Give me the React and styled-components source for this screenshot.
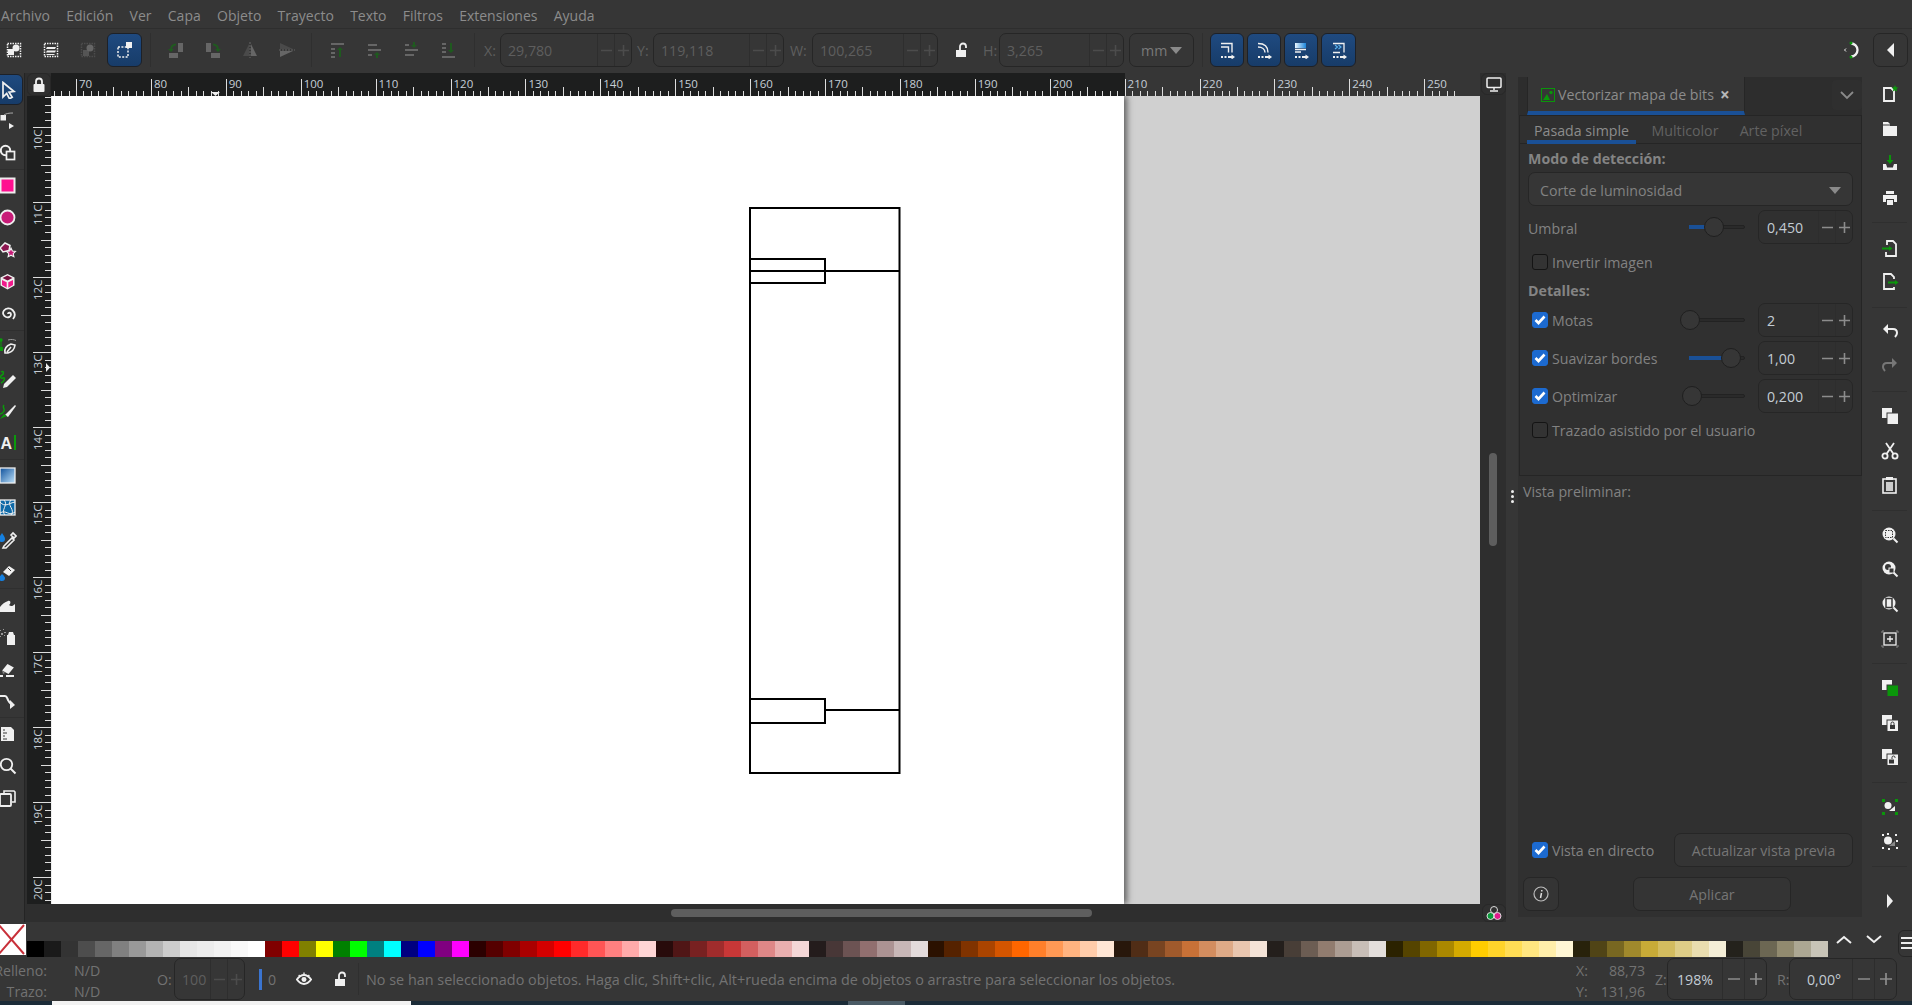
import React from "react";
import styled, { createGlobalStyle } from "styled-components";

const W = "#f0f0f0";
const G = "#0a960a";
const D = "#666";
const DG = "#1f5a1f";

const Global = createGlobalStyle`
  html, body { margin: 0; padding: 0; background: #363636; overflow: hidden; }
  * { box-sizing: border-box; }
  #root { width: 1912px; height: 1005px; }
`;

const Page = styled.div`
  width: 1912px; height: 1005px; display: flex; flex-direction: column; overflow: hidden;
  background: #363636; color: #8a8a8a;
  font-family: "Open Sans", "Noto Sans", sans-serif; font-size: 14.2px;
`;
const MenuBar = styled.div`
  height: 29px; flex: none; display: flex; align-items: center; padding: 3px 0 0 1px; gap: 16.3px;
  border-bottom: 1px solid #2e2e2e;
`;
const MenuItem = styled.span`font-size: 14px; color: #8c8c8c;`;
const Toolbar = styled.div`
  height: 44px; flex: none; display: flex; align-items: center; padding-bottom: 2px;
  & > :first-child { margin-left: -5px; }
`;
const IconBtn = styled.div`
  width: 37px; height: 34px; flex: none; display: flex; align-items: center; justify-content: center;
  margin-left: ${(p) => p.$ml || 0}px;
`;
const ActiveBtn = styled(IconBtn)`
  width: 35px; margin: 0 1px; border-radius: 6px; border: 1px solid #1d2128;
  background: linear-gradient(#1f4a80, #173c69);
`;
const BlueBtn = styled(ActiveBtn)`
  margin: 0 0 0 ${(p) => p.$ml ?? 3}px;
  width: ${(p) => p.$w || 34}px;
`;
const VSep = styled.div`
  width: 1px; height: 34px; flex: none; background: #2f2f2f; margin-left: ${(p) => p.$ml || 0}px;
`;
const Lbl = styled.span`
  flex: none; width: ${(p) => p.$w}px; margin-left: ${(p) => p.$ml || 0}px; color: ${(p) => p.$c || "#5e5e5e"};
`;
const Spin = styled.div`
  flex: none; width: ${(p) => p.$w}px; height: ${(p) => p.$h || 34}px; margin-left: ${(p) => p.$ml || 0}px;
  display: flex; border: 1px solid #262626; border-radius: 7px; overflow: hidden;
`;
const SpinVal = styled.div`
  flex: 1; min-width: 0; display: flex; align-items: center; padding-left: ${(p) => p.$pl || 7}px;
  color: ${(p) => p.$c || "#5e5e5e"}; white-space: nowrap;
`;
const SpinKey = styled.div`
  flex: none; width: ${(p) => p.$w || 17}px; display: flex; align-items: center; justify-content: center;
  border-left: 1px solid ${(p) => (p.$on ? "#2d2d2d" : "#2e2e2e")};
  color: ${(p) => (p.$on ? "#8c8c8c" : "#4c4c4c")};
`;
const Glyph = ({ plus, s = 11 }) => (
  <svg width={s} height={s} viewBox="0 0 11 11">
    <path d={plus ? "M0 5.5h11M5.5 0v11" : "M0 5.5h11"} stroke="currentColor" strokeWidth="1.6" />
  </svg>
);
const SpinBox = ({ value, w, h, ml, on, key1 = 17, pl, s }) => (
  <Spin $w={w} $h={h} $ml={ml}>
    <SpinVal $c={on ? "#c3ccd4" : undefined} $pl={pl}>{value}</SpinVal>
    <SpinKey $w={key1} $on={on}><Glyph s={s} /></SpinKey>
    <SpinKey $w={key1} $on={on}><Glyph plus s={s} /></SpinKey>
  </Spin>
);
const Combo = styled.div`
  flex: none; width: 65px; height: 34px; margin-left: 5px; display: flex; align-items: center; justify-content: space-between;
  padding: 0 11px 0 11px; border: 1px solid #262626; border-radius: 7px; color: #7a7a7a;
`;
const Tri = styled.span`
  width: 0; height: 0; border-left: 6px solid transparent; border-right: 6px solid transparent;
  border-top: 7px solid ${(p) => p.$c || "#8a8a8a"};
`;
const Spacer = styled.div`flex: 1;`;
const SquareBtn = styled.div`
  width: 35px; height: 34px; flex: none; margin: 0 4px 0 13px; border: 1px solid #262626; border-radius: 7px;
  display: flex; align-items: center; justify-content: center;
`;

/* main */
const Main = styled.div`flex: 1; min-height: 0; display: flex;`;
const LeftTools = styled.div`
  width: 25px; flex: none; height: 100%; display: flex; flex-direction: column; align-items: stretch;
  border-right: 1px solid #242424;
`;
const ToolSlot = styled.div`
  height: 32px; flex: none; display: flex; align-items: center; justify-content: flex-start; overflow: hidden;
  & > svg { margin-left: -1px; }
`;
const ToolActive = styled(ToolSlot)`
  height: 31px; margin: 1px 1px 0 -4px; padding-left: 4px; border-radius: 0 6px 6px 0; border: 1px solid #1d2128;
  background: linear-gradient(#1f4a80, #173c69);
`;
const HLine = styled.div`
  height: 1px; flex: none; background: #2f2f2f;
`;
const CanvasCol = styled.div`
  width: 1481px; flex: none; display: grid;
  grid-template-columns: 26px 1429px 26px; grid-template-rows: 23px 808px 18px;
  background: #2e2e2e;
`;
const LockBox = styled.div`
  display: flex; align-items: center; justify-content: center; background: #2f2f2f; border: 1px solid #282828; border-radius: 6px;
  margin-left: 2px;
`;
const RulerTop = styled.svg`display: block; background: #363636;`;
const ScreenBtn = styled.div`
  display: flex; align-items: center; justify-content: center; border: 1px solid #282828; border-radius: 6px; background: #2f2f2f;
  height: 22px; margin-left: 1px;
`;
const RulerLeft = styled.svg`display: block; background: #1d1e1e; margin-left: 2px;`;
const Viewport = styled.div`
  position: relative; display: flex; background: #d0d0d0; overflow: hidden;
`;
const Sheet = styled.div`
  width: 1073px; flex: none; background: #fff; box-shadow: 3px 0 6px rgba(60,60,60,.75); position: relative; border-left: 1px solid #eee;
`;
const Drawing = styled.svg`position: absolute; left: -1px; top: 0; display: block;`;
const VScroll = styled.div`
  position: relative; background: #2e2e2e;
`;
const VThumb = styled.div`
  position: absolute; left: 9px; top: 357px; width: 8px; height: 93px; border-radius: 4px; background: #5e5e5e;
`;
const Corner = styled.div`background: #2e2e2e; margin-left: 2px;`;
const HScroll = styled.div`
  background: #2e2e2e; display: flex; align-items: center;
`;
const HThumb = styled.div`
  width: 421px; height: 8px; border-radius: 4px; background: #5e5e5e; margin-left: 620px;
`;
const ColorBtn = styled.div`
  display: flex; align-items: center; justify-content: center; border: 1px solid #282828; border-radius: 6px; background: #303030; margin-left: 2px;
`;

const Handle = styled.div`
  width: 12px; flex: none; display: flex; flex-direction: column; align-items: center; padding-top: 417px; gap: 2px;
`;
const Dot = styled.i`width: 3px; height: 3px; background: #eee; display: block; border-radius: 50%;`;
const Dock = styled.div`
  width: 344px; flex: none; height: 840px; margin-top: 4px; padding-bottom: 6px; display: flex; flex-direction: column; background: #303030;
`;
const TabBar = styled.div`height: 38px; flex: none; display: flex; align-items: flex-start; background: #2d2d2d; padding-left: 9px;`;
const DockTab = styled.div`
  width: 218px; height: 38px; flex: none; display: flex; align-items: center; gap: 3px; padding: 1px 0 0 13px; white-space: nowrap;
  border-left: 1px solid #262626; border-right: 1px solid #262626; border-bottom: 4px solid #1a5096; background: #363636; color: #8c8c8c;
`;
const TabClose = styled.span`color: #b8b8b8; font-size: 17px; line-height: 17px; font-weight: 700; margin-left: 3px;`;
const ChevBox = styled.div`
  width: 30px; height: 30px; margin: 3px 0 0 auto; background: #2f2f2f; border-radius: 4px; display: flex; align-items: center; justify-content: center;
`;
const Box = styled.div`
  width: 343px; margin-left: 1px; height: 361px; flex: none; border: 1px solid #252525; display: flex; flex-direction: column; background: #303030;
`;
const InnerTabs = styled.div`
  height: 28px; flex: none; display: flex; padding-left: 7px; border-bottom: 1px solid #252525;
`;
const InnerTab = styled.div`
  height: 28px; display: flex; align-items: center; justify-content: center; flex: none;
  width: ${(p) => p.$w}px; margin-right: ${(p) => p.$mr || 0}px;
  color: ${(p) => (p.$on ? "#8c8c8c" : "#626262")};
  border-bottom: ${(p) => (p.$on ? "4px solid #1a5096" : "none")};
  padding-top: ${(p) => (p.$on ? 4 : 0)}px;
`;
const Bold = styled.div`
  height: ${(p) => p.$h}px; flex: none; display: flex; align-items: center; padding-left: 8px; font-weight: 700; color: #848484;
  margin-top: ${(p) => p.$mt || 0}px;
`;
const SelectBox = styled.div`
  height: 34px; width: 325px; margin-left: 8px; flex: none; border: 1px solid #262626; border-radius: 7px; background: #363636;
  display: flex; align-items: center; justify-content: space-between; padding: 2px 11px 0; color: #828282;
`;
const Row = styled.div`
  height: 34px; flex: none; margin-top: ${(p) => p.$mt || 0}px; display: flex; align-items: center; padding-right: 8px;
`;
const RowLabel = styled.div`flex: 1; padding: 2px 0 0 8px; color: #828282;`;
const CheckRow = styled.div`
  height: ${(p) => p.$h || 24}px; flex: ${(p) => (p.$grow ? 1 : "none")}; margin-top: ${(p) => p.$mt || 0}px; padding-left: ${(p) => p.$pl || 12}px;
  display: flex; align-items: center; gap: 4px; color: #828282;
`;
const Check = styled.span`
  width: 16px; height: 16px; flex: none; border-radius: 3px; display: flex; align-items: center; justify-content: center;
  background: ${(p) => (p.$on ? "#1c6ad0" : "#333")};
  border: 1px solid ${(p) => (p.$on ? "#1c6ad0" : "#141414")};
`;
const CheckBox = ({ on }) => (
  <Check $on={on}>
    {on && (
      <svg width="12" height="10" viewBox="0 0 12 10">
        <path d="M1.5 5l3 3 6-6.5" fill="none" stroke="#fff" strokeWidth="2.6" />
      </svg>
    )}
  </Check>
);
const SliderWrap = styled.div`width: 65px; height: 20px; flex: none; position: relative; margin-right: 13px;`;
const Track = styled.div`
  position: absolute; left: 9px; right: 0; top: 8px; height: 4px; border-radius: 2px; background: #2a2a2a; border: 1px solid #222;
`;
const Fill = styled.div`
  position: absolute; left: 9px; top: 8px; height: 4px; background: #1a5096; width: ${(p) => p.$at - 9}px;
`;
const Knob = styled.div`
  position: absolute; top: 0; left: ${(p) => p.$at - 10}px; width: 20px; height: 20px; border-radius: 50%; background: #363636; border: 1px solid #1f1f1f;
`;
const Slider = ({ at, fill }) => (
  <SliderWrap>
    <Track />
    {fill && <Fill $at={at} />}
    <Knob $at={at} />
  </SliderWrap>
);
const Preview = styled.div`height: 30px; flex: none; padding-left: 5px; display: flex; align-items: center; color: #828282;`;
const Btn = styled.div`
  flex: none; height: 34px; width: ${(p) => p.$w}px; margin-left: ${(p) => p.$ml || 0}px; border: 1px solid #262626; border-radius: 7px;
  display: flex; align-items: center; justify-content: center; color: #767676; background: #343434;
`;
const BottomRow = styled.div`display: flex; align-items: center; height: 34px; flex: none; margin-top: ${(p) => p.$mt || 0}px; padding-right: 9px;`;
const Grow = styled.div`flex: 1;`;
const RightTools = styled.div`
  width: 50px; flex: none; padding-top: 4px; display: flex; flex-direction: column; align-items: stretch;
`;
const RSlot = styled.div`height: 34.6px; flex: none; display: flex; align-items: center; justify-content: center; padding-left: 6px;`;
const RArrow = styled(RSlot)`margin-top: 10px;`;
const RSep = styled.div`height: 1px; flex: none; margin: 7px 5px 7px 10px; background: #2f2f2f;`;

/* palette */
const PaletteRow = styled.div`height: 35px; flex: none; display: flex; align-items: flex-end;`;
const NoColor = styled.div`width: 26px; height: 31px; flex: none; align-self: flex-end; margin-bottom: 2px; background: #fff; overflow: hidden;`;
const Swatches = styled.div`
  width: 1801px; height: 16px; flex: none; margin-left: 1px; display: grid; grid-template-columns: repeat(106, 1fr);
`;
const Sw = styled.div`background: ${(p) => p.$c};`;
const PalCtl = styled.div`
  flex: 1; height: 100%; display: flex; align-items: center; padding-left: 8px; gap: 14px;
`;
const MenuBtn = styled.div`
  width: 20px; height: 27px; margin: 7px 0 0 2px; border: 1px solid #262626; border-radius: 6px; display: flex; flex-direction: column; justify-content: center; align-items: center; gap: 3px;
`;
const Bar = styled.i`display: block; width: 14px; height: 2px; background: #eee;`;

/* status */
const Status = styled.div`height: 44px; flex: none; display: flex; align-items: center; overflow: hidden;`;
const StackCol = styled.div`
  flex: none; width: ${(p) => p.$w}px; margin: 4px 0 0 ${(p) => p.$ml || 0}px; display: flex; flex-direction: column; gap: 2px; overflow: hidden;
  align-items: ${(p) => (p.$a === "right" ? "flex-end" : "flex-start")}; color: #727272; white-space: nowrap; line-height: 19px;
  & > span { flex: none; }
`;
const StatusText = styled.span`
  flex: none; margin-left: ${(p) => p.$ml || 0}px; width: ${(p) => (p.$w ? `${p.$w}px` : "auto")}; color: ${(p) => p.$c || "#727272"}; white-space: nowrap;
  font-size: ${(p) => p.$fs || 14.2}px;
`;
const BlueMark = styled.i`display: block; flex: none; margin-left: 14px; width: 3px; height: 21px; background: #3a74d0;`;
const StatusIcon = styled.div`flex: none; width: 24px; margin-left: 14px; display: flex; justify-content: center;`;
const StatSep = styled.i`display: block; flex: none; width: 1px; height: 32px; margin-left: 4px; background: #2f2f2f;`;
const Strip = styled.div`
  height: 4px; flex: none; background: #1c2c38; display: flex;
`;
const StripPart = styled.div`
  flex: none; margin-left: ${(p) => p.$ml}px; width: ${(p) => p.$w}px; background: ${(p) => p.$c};
`;

const menus = ["Archivo", "Edición", "Ver", "Capa", "Objeto", "Trayecto", "Texto", "Filtros", "Extensiones", "Ayuda"];

const I = ({ s = 18, v = 18, children }) => (
  <svg width={s} height={s} viewBox={`0 0 ${v} ${v}`} style={{ flex: "none", display: "block" }}>{children}</svg>
);
const dotted = (c) => <rect x="1.5" y="1.5" width="13" height="13" fill="none" stroke={c} strokeWidth="1.5" strokeDasharray="1.5 1" />;

const top = {
  selAll: (c) => <I v={16} s={16}>{dotted(c)}<rect x="2" y="7" width="6" height="6" fill={c} /><circle cx="10" cy="6" r="3.5" fill={c} /></I>,
  layers: (c) => <I v={16} s={16}>{dotted(c)}<path d="M4 5h9l-1 2H3zM4 8.5h9l-1 2H3zM4 12h8l-1 1H3z" fill={c} /></I>,
  touch: () => <I v={16} s={16}>{dotted("#4c4c4c")}<rect x="3" y="8" width="6" height="6" fill="#555" /><circle cx="10" cy="6" r="3.5" fill="#666" /></I>,
  active: () => <I v={18} s={18}><rect x="2" y="6" width="10" height="10" fill="none" stroke={W} strokeWidth="1.5" strokeDasharray="2 1.4" /><rect x="10" y="1" width="6" height="6" fill={W} /></I>,
  rotL: () => <I><rect x="11" y="2" width="5" height="9" fill={D} /><rect x="2" y="12" width="9" height="5" fill={D} /><path d="M9 3.5C5.5 3.5 4 5.5 4 9" fill="none" stroke={DG} strokeWidth="2" /><path d="M1 8l3 3 3-3z" fill={DG} /></I>,
  rotR: () => <I><rect x="2" y="2" width="5" height="9" fill={D} /><rect x="7" y="12" width="9" height="5" fill={D} /><path d="M9 3.5c3.5 0 5 2 5 5.5" fill="none" stroke={DG} strokeWidth="2" /><path d="M11 8l3 3 3-3z" fill={DG} /></I>,
  flipH: () => <I><path d="M8 3v12H2z" fill="#4a4a4a" /><path d="M10 3v12h6z" fill={D} /><path d="M9 1v16" stroke={D} strokeDasharray="2 1" /></I>,
  flipV: () => <I><path d="M2 2v6h13z" fill="#4a4a4a" /><path d="M2 16v-6h13z" fill={D} /><path d="M1 9h16" stroke={D} strokeDasharray="2 1" /></I>,
  raiseTop: () => <I><path d="M2 2h13v2H2z" fill={D} /><path d="M2 7h4v2H2zM2 11h4v2H2zM2 15h4v2H2z" fill={D} /><path d="M11 16V8" stroke={DG} strokeWidth="2" /><path d="M8 9l3-3 3 3z" fill={DG} /></I>,
  raise: () => <I><path d="M2 3h9v2H2zM2 8h13v2H2zM2 13h4v2H2z" fill={D} /><path d="M11 17v-4" stroke={DG} strokeWidth="2" /><path d="M8 14l3-3 3 3z" fill={DG} /></I>,
  lower: () => <I><path d="M2 8h13v2H2zM2 13h9v2H2zM2 3h4v2H2z" fill={D} /><path d="M11 1v4" stroke={DG} strokeWidth="2" /><path d="M8 4l3 3 3-3z" fill={DG} /></I>,
  lowerBot: () => <I><path d="M2 15h13v2H2zM2 2h4v2H2zM2 6h4v2H2zM2 10h4v2H2z" fill={D} /><path d="M11 2v8" stroke={DG} strokeWidth="2" /><path d="M8 9l3 3 3-3z" fill={DG} /></I>,
};

const dash = (
  <>
    <path d="M3 16h2M6.500 16h2M10 16h4" stroke={W} strokeWidth="2" />
    <path d="M13.500 13.500l3.500 2.500-3.500 2.500z" fill={W} />
  </>
);
const snapIcons = [
  <I key="a"><path d="M3 2.500h11v9M3 6h7.500v5.500" fill="none" stroke={W} strokeWidth="1.400" />{dash}</I>,
  <I key="b"><path d="M3 2.500c6 0 10 3 10 9M3 6c4 0 7 2 7 5.500" fill="none" stroke={W} strokeWidth="1.400" />{dash}</I>,
  <I key="c"><defs><linearGradient id="sb" x1="0" x2="1" y1="0" y2="0"><stop offset="0" stopColor="#eaf6ff" /><stop offset="1" stopColor="#1c86dc" /></linearGradient></defs><rect x="3" y="2" width="11" height="5" fill="url(#sb)" /><path d="M3 8.500h11M3 11h6" stroke={W} strokeWidth="1.500" />{dash}</I>,
  <I key="d"><path d="M3 2.500h11v9M3 11.500h7" fill="none" stroke={W} strokeWidth="1.300" /><path d="M5 4l2.500 2L5 8M8.500 4L11 6 8.500 8" fill="none" stroke="#5ab4f0" strokeWidth="1.100" />{dash}</I>,
];

const LockOpen = ({ c = W }) => (
  <I v={16} s={16}><path d="M5 8V4.500a3 3 0 0 1 6 0V6" fill="none" stroke={c} strokeWidth="1.800" /><rect x="1" y="8" width="10" height="7" fill={c} /></I>
);
const G2 = "#0b9a0b";
const tools = [
  [<path key="a" d="M3 1.500l11 9-5 .7 3.200 5-2.700 1.600-2.800-5.300L3 16z" fill="none" stroke={W} strokeWidth="1.700" />],
  [<rect key="a" x="1.500" y="3" width="5.500" height="5.500" fill={W} />, <path key="b" d="M5 3C7 1.500 10 1 14 1" stroke="#aaa" fill="none" />, <path key="c" d="M10 11l5 3-5 3z" fill={W} />],
  [<circle key="a" cx="6.500" cy="6.500" r="4.700" fill="none" stroke={W} strokeWidth="2" />, <rect key="b" x="7.500" y="7.500" width="8" height="8" fill="#363636" stroke={W} strokeWidth="1.700" />],
  [<rect key="a" x="1.500" y="1.500" width="14" height="14" fill="#ff1090" stroke="#eee" strokeWidth="2" />],
  [<circle key="a" cx="8.500" cy="8.500" r="7" fill="#c81c78" stroke="#eee" strokeWidth="1.800" />],
  [<path key="a" d="M6 2l5 2.500-1 5-6 1.500L1 7z" fill="#8c1550" stroke={W} strokeWidth="1.500" />, <path key="b" d="M12 7l1.400 3 3.100.4-2.300 2.200.7 3.200-2.900-1.600-2.900 1.600.7-3.200-2.300-2.200 3.100-.4z" fill="#c81c78" stroke={W} strokeWidth="1.100" />],
  [<path key="a" d="M8.500 1l7 3.500v8l-7 4-7-4v-8z" fill={W} />, <path key="b" d="M8.500 2.500l5 2.500-5 2.500-5-2.500z" fill="#7a1040" />, <path key="c" d="M3 7l4.700 2.300v5.500L3 12z" fill="#f01a8c" />, <path key="d" d="M14 7L9.300 9.300v5.500L14 12z" fill="#f01a8c" />],
  [<path key="a" d="M9 9c0-2 3-1.500 3 .5S9.500 13 7 12 3 8 5 5.500 11 2.500 13.500 5 16.500 11 14 14" fill="none" stroke={W} strokeWidth="1.800" />],
  [<circle key="a" cx="2" cy="2" r="1.700" fill={G2} />, <rect key="b" x="0" y="9" width="4" height="4" fill={G2} />, <path key="c" d="M2 3v6" stroke={G2} />, <path key="d" d="M6 15c-1-4 1-7 6-9l4 1c-.5 4-3 7-7 8zM8 14l4-5" fill="none" stroke={W} strokeWidth="1.600" />, <path key="e" d="M9 2c3-1 6-.5 8 .5" stroke="#999" fill="none" />],
  [<path key="a" d="M2 2c3-2 3 2 1 3s-2 4 1 3 1 4-2 5" fill="none" stroke={G2} strokeWidth="1.500" />, <path key="b" d="M5 14l9-9 3 3-9 9-4 1z" fill={W} />],
  [<path key="a" d="M5 3c-2 2 1 4 0 6s-3 3-5 3" fill="none" stroke={G2} strokeWidth="1.500" />, <path key="b" d="M6 13L16 3l1 1L9 15z" fill={W} />, <path key="c" d="M1 17l4-5 3 2z" fill={G2} />],
  [<text key="a" x="1.500" y="15" fontFamily="Liberation Sans" fontWeight="700" fontSize="16" fill={W}>A</text>, <rect key="b" x="15" y="1" width="2" height="15" fill={G2} />],
  [<defs key="d"><linearGradient id="gr" x1="0" y1="0" x2="1" y2="1"><stop offset="0" stopColor="#0d4f9a" /><stop offset="1" stopColor="#bfe3fb" /></linearGradient></defs>, <rect key="a" x="1" y="1" width="15" height="15" fill="url(#gr)" stroke="#eee" strokeWidth="1.300" />],
  [<rect key="a" x="1" y="1" width="15" height="15" fill="#0f6aa8" stroke="#eee" strokeWidth="1.300" />, <path key="b" d="M1 3c5 6 9 1 15 0M1 14c6-4 9 4 15-1M5 1c5 5-4 10 1 15M12 1c-5 5 5 10 0 15" fill="none" stroke={W} />],
  [<path key="a" d="M3 2c2 3 3 4 3 6a3 3 0 0 1-6 0c0-2 1-3 3-6z" fill="#1580e0" />, <path key="b" d="M5 15l8-8 2 2-8 8H4zM12 4l2-2 3 3-2 2z" fill="none" stroke={W} strokeWidth="1.600" />],
  [<path key="a" d="M3 11c2 2 3 3 3 4a3 3 0 0 1-6 0c0-1 1-2 3-4z" fill="#1580e0" />, <path key="b" d="M4 9l6-6 6 4-6 6z" fill={W} />, <path key="c" d="M9 5l3 3" stroke="#363636" />],
  [<path key="a" d="M1 16v-5c2-3 5-5 8-6 3-1 3 3 1 4 2 2 4 1 6-1v8z" fill={W} />],
  [<path key="a" d="M8 7h8v10H8zM10 4h4l1 3H9z" fill={W} />, <path key="b" d="M1 2h1v1H1zM4 1h1v1H4zM2 5h2v2H2zM5 4h2v1H5zM1 8h1v1H1zM5 7h1v1H5z" fill="#999" />],
  [<path key="a" d="M3 10l6-6 6 4-6 6z" fill={W} transform="rotate(-6 9 9)" />, <path key="b" d="M3 10l3 3-2 1z" fill="#888" />, <path key="c" d="M1 16h3M7 16h8" stroke={W} strokeWidth="1.800" />],
  [<path key="a" d="M1 4h5c2 0 2 2 3 4s2 4 5 4" fill="none" stroke={W} strokeWidth="2" />, <path key="b" d="M11 8l5 5-5 4z" fill={W} />],
  [<path key="a" d="M2 2h10l3 3v11H2z" fill={W} />, <path key="b" d="M4 5h2M4 8h4M4 11h2M4 14h4" stroke="#363636" />],
  [<circle key="a" cx="7.500" cy="7.500" r="5.700" fill="none" stroke={W} strokeWidth="1.800" />, <path key="b" d="M11.500 11.500l5 5" stroke={W} strokeWidth="2" />],
  [<path key="a" d="M5 4V2h10l1 1v10h-3" fill="none" stroke={W} strokeWidth="1.600" />, <rect key="b" x="1" y="5" width="11" height="12" rx="1" fill="none" stroke={W} strokeWidth="1.800" />],
];
const toolGroups = [[0, 3], [3, 8], [8, 12], [12, 16], [16, 20], [20, 23]];

const mag = (inner) => (
  <>
    <circle cx="8" cy="8" r="6.500" fill={W} />
    <path d="M12.500 12.500l4 4" stroke={W} strokeWidth="2" />
    {inner}
  </>
);
const dup = (fg, extra) => (
  <>
    <rect x="1" y="1" width="10" height="10" fill={W} />
    <rect x="5.500" y="5.500" width="12" height="12" fill="#363636" />
    <rect x="6.500" y="6.500" width="10.500" height="10.500" fill={fg} />
    {extra}
  </>
);
const rightTools = [
  [<I key="n"><path d="M3 3h7l3 3v10H3z" fill="none" stroke={W} strokeWidth="1.900" /><path d="M14 0l1 2.200 2.300.3-1.700 1.600.5 2.400-2.100-1.200-2.100 1.200.5-2.400-1.700-1.600 2.300-.3z" fill={G} /></I>,
   <I key="o"><path d="M2 2h5l2 2h-7zM2 6h14v10H2z" fill={W} /><path d="M2 5h7" stroke={W} /></I>,
   <I key="s"><path d="M2 10h3l1 3h6l1-3h3v6H2z" fill={W} /><rect x="6" y="12" width="6" height="1.500" fill="#363636" /><path d="M9 1v7" stroke={G} strokeWidth="2" /><path d="M5.500 6L9 10l3.500-4z" fill={G} /></I>,
   <I key="p"><path d="M5 2h8v3H5zM2 6h14v7h-3v-3H5v3H2zM6 11h6v5H6z" fill={W} /></I>],
  [<I key="i"><path d="M6 6V2h6l3 3v12H5v-4" fill="none" stroke={W} strokeWidth="1.800" /><path d="M1 9.500h8" stroke={G} strokeWidth="2" /><path d="M8 7l3.500 2.500L8 12z" fill={G} /></I>,
   <I key="e"><path d="M13 6V4l-3-3H3v15h10v-2" fill="none" stroke={W} strokeWidth="1.800" /><path d="M7 9.500h8" stroke={G} strokeWidth="2" /><path d="M14 7l3.500 2.500L14 12z" fill={G} /></I>],
  [<I key="u"><path d="M3 6h9c3 0 4 2 4 4s-1 3-2 4" fill="none" stroke={W} strokeWidth="2" /><path d="M7 1L2 6l5 5z" fill={W} /></I>,
   <I key="r"><path d="M15 6H6c-3 0-4 2-4 4s1 3 2 4" fill="none" stroke="#777" strokeWidth="2" /><path d="M11 1l5 5-5 5z" fill="#777" /></I>],
  [<I key="c">{dup(W)}</I>,
   <I key="x"><circle cx="4" cy="14" r="2.600" fill="none" stroke={W} strokeWidth="1.800" /><circle cx="14" cy="14" r="2.600" fill="none" stroke={W} strokeWidth="1.800" /><path d="M5.500 12L13 1M12.500 12L5 1" stroke={W} strokeWidth="1.800" /></I>,
   <I key="v"><rect x="2" y="3" width="13" height="14" fill="none" stroke={W} strokeWidth="1.600" /><rect x="5" y="1" width="7" height="3" fill={W} /><path d="M5 6h7v9H5z" fill="#ccc" /></I>],
  [<I key="z1">{mag(<rect x="4.500" y="4.500" width="7" height="7" fill="none" stroke="#363636" strokeDasharray="1.500 1" />)}</I>,
   <I key="z2">{mag(<><circle cx="7" cy="7" r="3" fill="#363636" /><rect x="8" y="8" width="5" height="5" fill="#363636" stroke={W} /></>)}</I>,
   <I key="z3">{mag(<rect x="5" y="3.500" width="6" height="9" fill="none" stroke="#363636" strokeWidth="1.500" />)}</I>,
   <I key="z4"><rect x="3" y="3" width="12" height="12" fill="none" stroke={W} strokeWidth="1.300" /><path d="M6 9h6M9 6v6" stroke={W} strokeWidth="1.300" /><path d="M1 3V1h2M15 1h2v2M1 15v2h2M17 15v2h-2" stroke="#888" fill="none" /></I>],
  [<I key="d1">{dup(G)}</I>,
   <I key="d2">{dup(W, <><rect x="9" y="11" width="5" height="4" fill="#363636" /><path d="M10 11V9.500a1.500 1.500 0 0 1 3 0V11" fill="none" stroke="#363636" /></>)}</I>,
   <I key="d3">{dup(W, <><rect x="8" y="11.500" width="5" height="4" fill="#363636" /><path d="M11 11V9.500a1.500 1.500 0 0 1 3 0V10" fill="none" stroke="#363636" /></>)}</I>],
  [<I key="g"><path d="M1 1h3v3H1zM14 1h3v3h-3zM1 14h3v3H1zM14 14h3v3h-3z" fill={G} /><circle cx="7" cy="7.500" r="3.500" fill={W} /><path d="M8 13l6-5v5z" fill={W} /></I>,
   <I key="h"><path d="M1 1h2v2H1zM6 0h2v2H6zM14 1h2v2h-2zM1 14h2v2H1zM7 15h2v2H7zM15 14h2v2h-2zM15 7h2v2h-2z" fill={W} /><path d="M8 13l6-5v5z" fill="#888" /><circle cx="7" cy="7.500" r="4" fill={W} /></I>],
];

const pal = "#000 #1a1a1a #333 #4d4d4d #666 #808080 #999 #b3b3b3 #ccc #e6e6e6 #ececec #f2f2f2 #f9f9f9 #fff #800000 #f00 #808000 #ff0 #008000 #0f0 #008080 #0ff #000080 #00f #800080 #f0f #2b0000 #500 #800000 #a00 #d40000 #f00 #ff2a2a #f55 #ff8080 #faa #ffd5d5 #280b0b #501616 #782121 #a02c2c #c83737 #d35f5f #de8787 #e9afaf #f4d7d7 #241c1c #483737 #6c5353 #916f6f #ac9393 #c8b7b7 #e3dbdb #2b1100 #520 #803300 #a40 #d45500 #f60 #ff7f2a #f95 #ffb380 #fca #ffe6d5 #28170b #502d16 #784421 #a05a2c #c87137 #d38d5f #deaa87 #e9c6af #f4e3d7 #241f1c #483e37 #6c5d53 #917c6f #ac9d93 #c8beb7 #e3dedb #2b2200 #540 #806600 #a80 #d4aa00 #fc0 #ffd42a #fd5 #ffe680 #fea #fff6d5 #28220b #504416 #786721 #a0892c #c8ab37 #d3bc5f #decd87 #e9ddaf #f4eed7 #24221c #484537 #6c6753 #918a6f #aca793 #c8c4b7".split(" ");

const range = (a, b) => Array.from({ length: b - a + 1 }, (_, i) => a + i);

const TopRuler = () => (
  <RulerTop width="1429" height="23" viewBox="0 0 1429 23">
    <rect x="0" y="0" width="1074" height="23" fill="#1d1e1e" />
    {range(67, 254).map((u) => {
      const x = Math.round(25 + (u - 70) * 7.49) + 0.5;
      const m = u % 10 === 0 ? 6 : u % 5 === 0 ? 14 : 18;
      return <path key={u} d={`M${x} ${m}V23`} stroke="#ddd" />;
    })}
    {range(7, 25).map((t) => (
      <text key={t} x={25 + (t * 10 - 70) * 7.49 + 3} y="15" fontFamily="Open Sans" fontSize="11.500" fill="#c6ced6">{t * 10}</text>
    ))}
    <path d="M160 19h9l-4.500 4z" fill="#eee" />
  </RulerTop>
);
const SideRuler = () => (
  <RulerLeft width="24" height="808" viewBox="0 0 24 808">
    {range(96, 207).map((u) => {
      const y = Math.round(31 + (u - 100) * 7.5) + 0.5;
      const m = u % 10 === 0 ? 6 : u % 5 === 0 ? 14 : 18;
      return <path key={u} d={`M${m} ${y}H24`} stroke="#ddd" />;
    })}
    {range(10, 20).map((t) => (
      <text key={t} transform={`translate(15 ${31 + (t * 10 - 100) * 7.5 + 23}) rotate(-90)`} fontFamily="Open Sans" fontSize="11.500" fill="#c6ced6">{String(t * 10).replace(/0$/, "C")}</text>
    ))}
    <path d="M19 267v9l4-4.500z" fill="#eee" />
  </RulerLeft>
);

export default function App() {
  return (
    <Page>
      <Global />
      <MenuBar>{menus.map((m) => <MenuItem key={m}>{m}</MenuItem>)}</MenuBar>
      <Toolbar>
        <IconBtn>{top.selAll(W)}</IconBtn>
        <IconBtn>{top.layers(W)}</IconBtn>
        <IconBtn>{top.touch()}</IconBtn>
        <ActiveBtn>{top.active()}</ActiveBtn>
        <VSep $ml={7} />
        <IconBtn $ml={6}>{top.rotL()}</IconBtn>
        <IconBtn>{top.rotR()}</IconBtn>
        <IconBtn>{top.flipH()}</IconBtn>
        <IconBtn>{top.flipV()}</IconBtn>
        <VSep $ml={6} />
        <IconBtn $ml={7}>{top.raiseTop()}</IconBtn>
        <IconBtn>{top.raise()}</IconBtn>
        <IconBtn>{top.lower()}</IconBtn>
        <IconBtn>{top.lowerBot()}</IconBtn>
        <VSep $ml={7} />
        <Lbl $w={16} $ml={9}>X:</Lbl>
        <SpinBox value="29,780" w={132} />
        <Lbl $w={16} $ml={5}>Y:</Lbl>
        <SpinBox value="119,118" w={131} />
        <Lbl $w={22} $ml={6}>W:</Lbl>
        <SpinBox value="100,265" w={126} />
        <IconBtn $ml={6}><LockOpen /></IconBtn>
        <Lbl $w={16} $ml={2}>H:</Lbl>
        <SpinBox value="3,265" w={125} />
        <Combo>mm<Tri /></Combo>
        <VSep $ml={8} />
        <BlueBtn $ml={7}>{snapIcons[0]}</BlueBtn>
        <BlueBtn>{snapIcons[1]}</BlueBtn>
        <BlueBtn>{snapIcons[2]}</BlueBtn>
        <BlueBtn $w={35}>{snapIcons[3]}</BlueBtn>
        <Spacer />
        <I>
          <path d="M9 2.500a6.500 6.500 0 0 1 0 13" fill="none" stroke={W} strokeWidth="2.300" />
          <circle cx="9" cy="2" r="1.500" fill={G} /><circle cx="9" cy="16" r="1.500" fill={G} />
          <path d="M4 7.500L2.500 9 4 10.500" fill="none" stroke={W} />
        </I>
        <SquareBtn>
          <svg width="9" height="14" viewBox="0 0 9 14"><path d="M8 0v14L1 7z" fill={W} /></svg>
        </SquareBtn>
      </Toolbar>
      <Main>
        <LeftTools>
          {toolGroups.map(([a, b], gi) => (
            <React.Fragment key={a}>
              {gi > 0 && <HLine />}
              {tools.slice(a, b).map((t, i) => {
                const Slot = a + i === 0 ? ToolActive : ToolSlot;
                return <Slot key={i}><I>{t}</I></Slot>;
              })}
            </React.Fragment>
          ))}
        </LeftTools>
        <CanvasCol>
          <LockBox>
            <svg width="14" height="16" viewBox="0 0 14 16"><path d="M4 7V4.500a3 3 0 0 1 6 0V7" fill="none" stroke={W} strokeWidth="1.800" /><rect x="1.500" y="7" width="11" height="8" rx="1" fill={W} /></svg>
          </LockBox>
          <TopRuler />
          <ScreenBtn>
            <svg width="16" height="15" viewBox="0 0 16 15"><rect x="1" y="1" width="14" height="9.500" rx="1" fill="none" stroke={W} strokeWidth="1.500" /><path d="M8 11v2M4 14h8" stroke={W} strokeWidth="1.500" /></svg>
          </ScreenBtn>
          <SideRuler />
          <Viewport>
            <Sheet>
              <Drawing width="1074" height="808" viewBox="51 96 1074 808">
                <g fill="none" stroke="#000" strokeWidth="2">
                  <rect x="750" y="208" width="149.500" height="565" />
                  <path d="M750 271H899.500" />
                  <rect x="750" y="259" width="75" height="24" />
                  <rect x="750" y="699" width="75" height="24" />
                  <path d="M825 710H899.500" />
                </g>
              </Drawing>
            </Sheet>
          </Viewport>
          <VScroll><VThumb /></VScroll>
          <Corner />
          <HScroll><HThumb /></HScroll>
          <ColorBtn>
            <svg width="18" height="16" viewBox="0 0 18 16"><circle cx="9" cy="5" r="3.500" fill="none" stroke="#ddd" /><circle cx="5.500" cy="11" r="3.500" fill="#0a9a3a" stroke="#ddd" /><circle cx="12.500" cy="11" r="3.500" fill="#e01a8c" stroke="#ddd" /></svg>
          </ColorBtn>
        </CanvasCol>
        <Handle><Dot /><Dot /><Dot /></Handle>
        <Dock>
          <TabBar>
            <DockTab>
              <svg width="14" height="14" viewBox="0 0 14 14"><rect x="0.500" y="0.500" width="13" height="13" fill="none" stroke={G} /><path d="M2 12l4-6 3 6z" fill={G} /><circle cx="10" cy="4.500" r="1.700" fill={G} /></svg>
              Vectorizar mapa de bits<TabClose>×</TabClose>
            </DockTab>
            <ChevBox>
              <svg width="14" height="9" viewBox="0 0 14 9"><path d="M1 1l6 6 6-6" fill="none" stroke="#8a8a8a" strokeWidth="1.800" /></svg>
            </ChevBox>
          </TabBar>
          <Box>
            <InnerTabs>
              <InnerTab $on $w={109} $mr={7}>Pasada simple</InnerTab>
              <InnerTab $w={84} $mr={5}>Multicolor</InnerTab>
              <InnerTab $w={78}>Arte píxel</InnerTab>
            </InnerTabs>
            <Bold $h={28}>Modo de detección:</Bold>
            <SelectBox>Corte de luminosidad<Tri /></SelectBox>
            <Row $mt={4}><RowLabel>Umbral</RowLabel><Slider at={34} fill /><SpinBox value="0,450" w={95} on pl={8} /></Row>
            <CheckRow $mt={6}><CheckBox />Invertir imagen</CheckRow>
            <Bold $h={24} $mt={4}>Detalles:</Bold>
            <Row $mt={1}><CheckRow><CheckBox on />Motas</CheckRow><Grow /><Slider at={10} /><SpinBox value="2" w={95} on pl={8} /></Row>
            <Row $mt={4}><CheckRow><CheckBox on />Suavizar bordes</CheckRow><Grow /><Slider at={51} fill /><SpinBox value="1,00" w={95} on pl={8} /></Row>
            <Row $mt={4}><CheckRow><CheckBox on />Optimizar</CheckRow><Grow /><Slider at={12} /><SpinBox value="0,200" w={95} on pl={8} /></Row>
            <CheckRow $mt={5}><CheckBox />Trazado asistido por el usuario</CheckRow>
          </Box>
          <Preview>Vista preliminar:</Preview>
          <Grow />
          <BottomRow>
            <CheckRow $h={34} $grow $pl={14}><CheckBox on />Vista en directo</CheckRow>
            <Btn $w={179}>Actualizar vista previa</Btn>
          </BottomRow>
          <BottomRow $mt={10}>
            <Btn $w={36} $ml={5}>
              <svg width="18" height="18" viewBox="0 0 18 18"><circle cx="9" cy="9" r="7" fill="none" stroke="#bbb" strokeWidth="1.200" /><path d="M9.500 8l-1 5M9.800 5v1.400" stroke="#ddd" strokeWidth="1.500" /></svg>
            </Btn>
            <Btn $w={158} $ml={74}>Aplicar</Btn>
          </BottomRow>
        </Dock>
        <RightTools>
          {rightTools.map((g, gi) => (
            <React.Fragment key={gi}>
              {g.map((ic, i) => <RSlot key={i}>{ic}</RSlot>)}
              <RSep />
            </React.Fragment>
          ))}
          <RArrow>
            <svg width="8" height="14" viewBox="0 0 8 14"><path d="M1 0v14l6-7z" fill={W} /></svg>
          </RArrow>
        </RightTools>
      </Main>
      <PaletteRow>
        <NoColor>
          <svg width="26" height="31" viewBox="0 0 26 31"><path d="M-1 1L24 30M24 1L-1 30" stroke="#c8303a" strokeWidth="2" /></svg>
        </NoColor>
        <Swatches>{pal.map((c, i) => <Sw key={i} $c={c} />)}</Swatches>
        <PalCtl>
          <svg width="16" height="9" viewBox="0 0 16 9"><path d="M1 8l7-6 7 6" fill="none" stroke={W} strokeWidth="2" /></svg>
          <svg width="16" height="9" viewBox="0 0 16 9"><path d="M1 1l7 6 7-6" fill="none" stroke={W} strokeWidth="2" /></svg>
          <MenuBtn><Bar /><Bar /><Bar /></MenuBtn>
        </PalCtl>
      </PaletteRow>
      <Status>
        <StackCol $w={47} $a="right"><span>Relleno:</span><span>Trazo:</span></StackCol>
        <StackCol $w={60} $ml={27}><span>N/D</span><span>N/D</span></StackCol>
        <StatusText $ml={23} $w={17}>O:</StatusText>
        <SpinBox value="100" w={71} h={42} />
        <BlueMark />
        <StatusText $ml={6} $w={10}>0</StatusText>
        <StatusIcon>
          <svg width="16" height="15" viewBox="0 0 18 16"><path d="M1 8c3-4 5-5 8-5s5 1 8 5c-3 4-5 5-8 5S4 12 1 8z" fill="none" stroke={W} strokeWidth="2.200" /><circle cx="9" cy="8" r="2.800" fill={W} /><path d="M3 3l2 2M15 3l-2 2M9 0v2" stroke={W} strokeWidth="1.500" /></svg>
        </StatusIcon>
        <StatusIcon><LockOpen /></StatusIcon>
        <StatSep />
        <StatusText $ml={7} $fs={14.4}>No se han seleccionado objetos. Haga clic, Shift+clic, Alt+rueda encima de objetos o arrastre para seleccionar los objetos.</StatusText>
        <Spacer />
        <StackCol $w={15}><span>X:</span><span>Y:</span></StackCol>
        <StackCol $w={54} $a="right"><span>88,73</span><span>131,96</span></StackCol>
        <StatusText $ml={10} $w={12}>Z:</StatusText>
        <SpinBox value="198%" w={100} h={42} on key1={22} pl={9} s={12} />
        <StatusText $ml={10} $w={12}>R:</StatusText>
        <SpinBox value="0,00°" w={108} h={42} on key1={22} pl={17} s={12} />
        <Lbl $w={15} />
      </Status>
      <Strip>
        <StripPart $ml={52} $w={359} $c="#f2f2f2" />
        <StripPart $ml={437} $w={57} $c="#4a5a65" />
      </Strip>
    </Page>
  );
}
